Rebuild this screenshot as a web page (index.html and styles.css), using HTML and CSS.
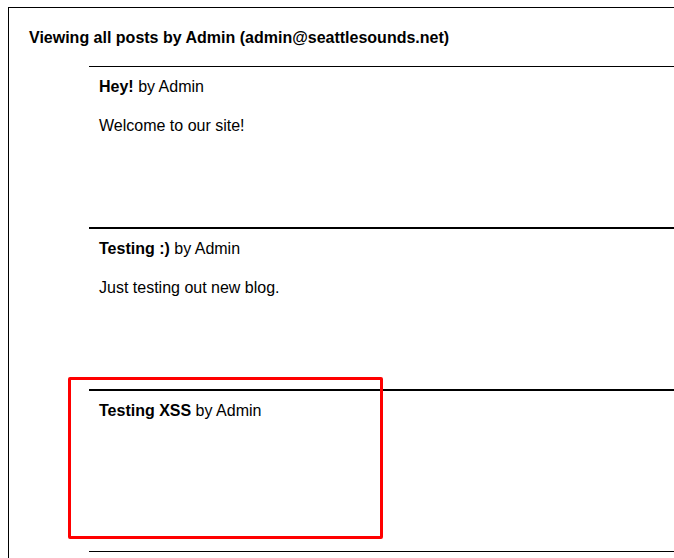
FILE: index.html
```html
<!DOCTYPE html>
<html>
<head>
<meta charset="utf-8">
<link rel="stylesheet" href="styles.css">
</head>
<body>
<div class="page">
  <h3 class="heading">Viewing all posts by Admin (admin@seattlesounds.net)</h3>
  <div class="posts">
    <div class="post">
      <div class="title"><b>Hey!</b> by Admin</div>
      <p class="body">Welcome to our site!</p>
    </div>
    <div class="post">
      <div class="title"><b>Testing :)</b> by Admin</div>
      <p class="body">Just testing out new blog.</p>
    </div>
    <div class="post highlighted">
      <div class="title"><b>Testing XSS</b> by Admin</div>
      <p class="body"></p>
      <div class="marker"></div>
    </div>
    <div class="post last"></div>
  </div>
</div>
</body>
</html>
```
FILE: styles.css
```css
html, body {
  margin: 0;
  padding: 0;
  background: #fff;
  overflow: hidden;
}
body {
  padding: 7px 0 0 8px;
  font-family: "Liberation Sans", Arial, sans-serif;
  font-size: 16px;
  color: #000;
}
.page {
  border-top: 1px solid #000;
  border-left: 1px solid #000;
  width: 720px;
  padding: 21px 0 0 20px;
  box-sizing: border-box;
  height: 600px;
}
.heading {
  margin: 0;
  font-size: 16px;
  line-height: 18px;
  font-weight: bold;
}
.posts {
  margin: 19px 0 0 60px;
}
.post {
  position: relative;
  border-top: 2px solid #000;
  padding: 11px 0 0 10px;
  height: 149px;
}
.post:first-child {
  border-top-width: 1px;
}
.post.last {
  border-top-width: 1px;
}
.title {
  line-height: 18px;
}
.body {
  margin: 21px 0 0;
  line-height: 18px;
}
.marker {
  position: absolute;
  left: -21px;
  top: -14px;
  width: 309px;
  height: 156px;
  border: 3px solid #ff0000;
  border-radius: 2px;
}
```
